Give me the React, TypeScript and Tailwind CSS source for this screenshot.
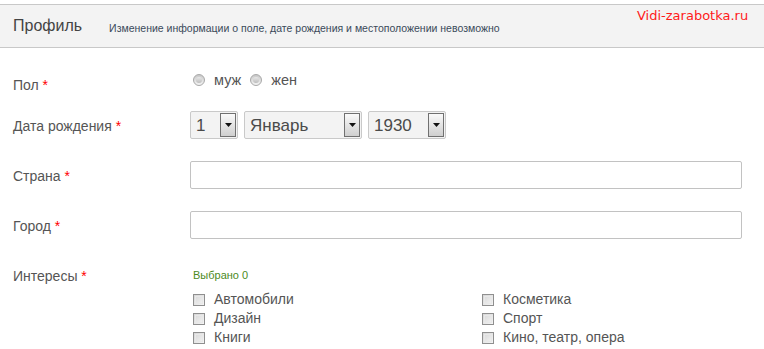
import React from 'react';

const Star = () => <span className="text-[#ff0000]"> *</span>;

const Radio: React.FC<{ label: string }> = ({ label }) => (
  <label className="flex items-center gap-[9px] leading-[16px]">
    <span className="w-[12px] h-[12px] rounded-full border border-[#a8a8a8] bg-gradient-to-b from-[#c8c8c8] to-[#f4f4f4] flex items-center justify-center">
      <span className="w-[6px] h-[6px] rounded-full bg-gradient-to-b from-[#e8e8e8] to-[#bdbdbd]" />
    </span>
    <span>{label}</span>
  </label>
);

const Select: React.FC<{ value: string; width: string }> = ({ value, width }) => (
  <div className={`${width} h-[28px] flex items-center justify-between rounded-[2px] border border-[#c9c9c9] bg-[#f3f3f3] pl-[5px] pr-[1px]`}>
    <span className="text-[17px] text-[#4a4a4a] leading-none">{value}</span>
    <span className="w-[16px] h-[24px] border border-[#707070] bg-gradient-to-b from-[#fafafa] to-[#cfcfcf] flex items-center justify-center">
      <svg width="7" height="4" viewBox="0 0 7 4">
        <path d="M0 0h7L3.5 4z" fill="#111" />
      </svg>
    </span>
  </div>
);

const Check: React.FC<{ label: string }> = ({ label }) => (
  <label className="flex items-center h-[19px] gap-[9px]">
    <span className="w-[12px] h-[12px] border border-[#8f8f8f] bg-gradient-to-br from-[#d6d6d6] to-[#f5f5f5] flex items-center justify-center">
      <span className="w-[8px] h-[8px] border border-[#e8e8e8]" />
    </span>
    <span>{label}</span>
  </label>
);

const App: React.FC = () => {
  const left = ['Автомобили', 'Дизайн', 'Книги'];
  const right = ['Косметика', 'Спорт', 'Кино, театр, опера'];

  return (
    <div className="w-[764px] h-[349px] bg-white overflow-hidden font-['Liberation_Sans',Arial,sans-serif] text-[#555]">
      <div className="mt-[4px] h-[44px] border-y border-[#c8c8c8] bg-[#f3f3f3] flex items-center relative">
        <span className="ml-[13px] text-[16px] text-[#444]">Профиль</span>
        <span className="ml-[27px] mt-[5px] text-[10.5px] text-[#3a4a5a]">
          Изменение информации о поле, дате рождения и местоположении невозможно
        </span>
        <span className="absolute left-[637px] top-[1px] text-[13px] text-[#ff1a1a] font-['DejaVu_Sans',sans-serif]">
          Vidi-zarabotka.ru
        </span>
      </div>

      <div className="flex h-[52px] text-[14px]">
        <div className="w-[190px] pl-[13px] pt-[29px] leading-[16px]">
          Пол<Star />
        </div>
        <div className="pt-[24px] pl-[3px] flex items-start gap-[9px] text-[14.5px]">
          <Radio label="муж" />
          <Radio label="жен" />
        </div>
      </div>

      <div className="flex items-center h-[50px] text-[14px]">
        <div className="w-[190px] pl-[13px] pt-[2px]">
          Дата рождения<Star />
        </div>
        <div className="flex gap-[6px]">
          <Select value="1" width="w-[48px]" />
          <Select value="Январь" width="w-[118px]" />
          <Select value="1930" width="w-[78px]" />
        </div>
      </div>

      <div className="flex items-center h-[50px] text-[14px]">
        <div className="w-[190px] pl-[13px] pt-[2px]">
          Страна<Star />
        </div>
        <div className="w-[552px] h-[28px] rounded-[2px] border border-[#c2c2c2] bg-white" />
      </div>

      <div className="flex items-center h-[50px] text-[14px]">
        <div className="w-[190px] pl-[13px] pt-[2px]">
          Город<Star />
        </div>
        <div className="w-[552px] h-[28px] rounded-[2px] border border-[#c2c2c2] bg-white" />
      </div>

      <div className="flex text-[14px]">
        <div className="w-[190px] pl-[13px] pt-[18px] leading-[16px]">
          Интересы<Star />
        </div>
        <div className="pl-[3px] pt-[18px]">
          <div className="text-[11px] text-[#4c8a1e] leading-[14px]">Выбрано 0</div>
          <div className="mt-[8px] flex">
            <div className="w-[289px] flex flex-col">
              {left.map((l) => (
                <Check key={l} label={l} />
              ))}
            </div>
            <div className="flex flex-col">
              {right.map((l) => (
                <Check key={l} label={l} />
              ))}
            </div>
          </div>
        </div>
      </div>
    </div>
  );
};

export default App;
